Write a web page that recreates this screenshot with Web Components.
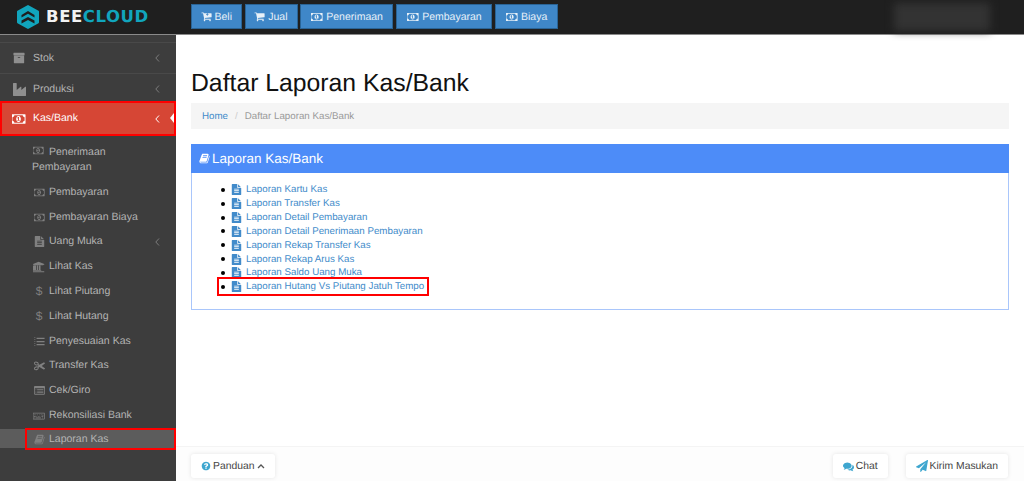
<!DOCTYPE html>
<html lang="id">
<head>
<meta charset="utf-8">
<title>Daftar Laporan Kas/Bank</title>
<style>
  html, body { margin: 0; height: 100%; overflow: hidden; background: #fff; }
  body { font-family: "Liberation Sans", Arial, sans-serif; text-rendering: geometricPrecision; }
</style>
</head>
<body>
<app-shell>
  <top-bar slot="top">
    <top-button icon="cartplus" size="11">Beli</top-button>
    <top-button icon="cart" size="11">Jual</top-button>
    <top-button icon="money" size="12">Penerimaan</top-button>
    <top-button icon="money" size="12">Pembayaran</top-button>
    <top-button icon="money" size="12">Biaya</top-button>
  </top-bar>
  <side-bar slot="side">
    <side-item icon="archive" size="12" level="1" arrow>Stok</side-item>
    <side-item icon="industry" size="13" level="1" arrow>Produksi</side-item>
    <side-item icon="money" size="14" level="1" arrow active>Kas/Bank</side-item>
    <div style="height:3px"></div>
    <side-item icon="money" size="11" wrap>Penerimaan Pembayaran</side-item>
    <side-item icon="money" size="11">Pembayaran</side-item>
    <side-item icon="money" size="11">Pembayaran Biaya</side-item>
    <side-item icon="file" size="11" arrow>Uang Muka</side-item>
    <side-item icon="bank" size="12">Lihat Kas</side-item>
    <side-item icon="usd">Lihat Piutang</side-item>
    <side-item icon="usd">Lihat Hutang</side-item>
    <side-item icon="listol" size="11">Penyesuaian Kas</side-item>
    <side-item icon="scissors" size="11">Transfer Kas</side-item>
    <side-item icon="listalt" size="11">Cek/Giro</side-item>
    <side-item icon="keyboard" size="12">Rekonsiliasi Bank</side-item>
    <side-item icon="book" size="11" current>Laporan Kas</side-item>
  </side-bar>
  <report-page slot="main" heading="Daftar Laporan Kas/Bank">
    <report-panel heading="Laporan Kas/Bank">
      <report-link>Laporan Kartu Kas</report-link>
      <report-link>Laporan Transfer Kas</report-link>
      <report-link>Laporan Detail Pembayaran</report-link>
      <report-link>Laporan Detail Penerimaan Pembayaran</report-link>
      <report-link>Laporan Rekap Transfer Kas</report-link>
      <report-link>Laporan Rekap Arus Kas</report-link>
      <report-link>Laporan Saldo Uang Muka</report-link>
      <report-link marked>Laporan Hutang Vs Piutang Jatuh Tempo</report-link>
    </report-panel>
  </report-page>
</app-shell>

<script>
// Icônes dessinées en SVG (viewBox + tracé)
const ICONS = {
  money: ['0 0 1920 1792', 'M704 1152h384v-96h-128v-448h-114l-148 137 77 80q42-37 55-57h2v288h-128v96zm512-256q0 70-21 142t-59.5 134-101.5 101-138 39-138-39-101.5-101-59.5-134-21-142 21-142 59.5-134 101.5-101 138-39 138 39 101.5 101 59.5 134 21 142zm512 256v-512q-106 0-181-75t-75-181h-1152q0 106-75 181t-181 75v512q106 0 181 75t75 181h1152q0-106 75-181t181-75zm128-832v1152q0 26-19 45t-45 19h-1792q-26 0-45-19t-19-45v-1152q0-26 19-45t45-19h1792q26 0 45 19t19 45z'],
  cart: ['0 0 1792 1792', 'M704 1536q0 52-38 90t-90 38-90-38-38-90 38-90 90-38 90 38 38 90zm896 0q0 52-38 90t-90 38-90-38-38-90 38-90 90-38 90 38 38 90zm128-1088v512q0 24-16.5 42.5t-40.5 21.500l-1044 122q13 60 13 70 0 16-24 64h920q26 0 45 19t19 45-19 45-45 19h-1024q-26 0-45-19t-19-45q0-11 8-31.500t16-36 21.500-40 15.500-29.500l-177-823h-204q-26 0-45-19t-19-45 19-45 45-19h256q16 0 28.500 6.500t19.500 15.500 13 24.500 8 26 5.500 29.500 4.500 26h1201q26 0 45 19t19 45z'],
  cartplus: ['0 0 1792 1792', 'M704 1536q0 52-38 90t-90 38-90-38-38-90 38-90 90-38 90 38 38 90zm896 0q0 52-38 90t-90 38-90-38-38-90 38-90 90-38 90 38 38 90zm128-1088v512q0 24-16.5 42.500t-40.500 21.500l-1044 122q13 60 13 70 0 16-24 64h920q26 0 45 19t19 45-19 45-45 19h-1024q-26 0-45-19t-19-45q0-11 8-31.500t16-36 21.500-40 15.500-29.500l-177-823h-204q-26 0-45-19t-19-45 19-45 45-19h256q16 0 28.500 6.500t19.500 15.500 13 24.500 8 26 5.500 29.500 4.500 26h1201q26 0 45 19t19 45zm-640 64v-128h-128v128h-128v128h128v128h128v-128h128v-128z'],
  file: ['0 0 1792 1792', 'M1596 476q14 14 28 36h-472v-472q22 14 36 28zm-476 164h544v1056q0 40-28 68t-68 28h-1344q-40 0-68-28t-28-68v-1600q0-40 28-68t68-28h800v544q0 40 28 68t68 28zm160 736v-64q0-14-9-23t-23-9h-704q-14 0-23 9t-9 23v64q0 14 9 23t23 9h704q14 0 23-9t9-23zm0-256v-64q0-14-9-23t-23-9h-704q-14 0-23 9t-9 23v64q0 14 9 23t23 9h704q14 0 23-9t9-23zm0-256v-64q0-14-9-23t-23-9h-704q-14 0-23 9t-9 23v64q0 14 9 23t23 9h704q14 0 23-9t9-23z'],
  book: ['0 0 1792 1792', 'M1703 478q40 57 18 129l-275 906q-19 64-76.500 107.500t-122.500 43.500h-923q-77 0-148.500-53.500t-99.500-131.500q-24-67-2-127 0-4 3-27t4-37q1-8-3-21.500t-3-19.500q2-11 8-21t16.500-23.500 16.500-23.500q23-38 45-91.500t30-91.500q3-10 .5-30t-.5-28q3-11 17-28t17-23q21-36 42-92t25-90q1-9-2.500-32t.5-28q4-13 22-30.500t22-22.500q19-26 42.500-84.500t27.500-96.500q1-8-3-25.500t-2-26.500q2-8 9-18t18-23 17-21q8-12 16.500-30.500t15-35 16-36 19.500-32 26.500-23.500 36-11.500 47.500 5.500l-1 3q38-9 51-9h761q74 0 114 56t18 130l-274 906q-36 119-71.500 153.500t-128.500 34.500h-869q-27 0-38 15-11 16-1 43 24 70 144 70h923q29 0 56-15.500t35-41.500l300-987q7-22 5-57 38 15 59 43zm-1064 2q-4 13 2 22.500t20 9.500h608q13 0 25.500-9.500t16.500-22.500l21-64q4-13-2-22.500t-20-9.500h-608q-13 0-25.500 9.500t-16.500 22.500zm-83 256q-4 13 2 22.500t20 9.500h608q13 0 25.500-9.500t16.500-22.500l21-64q4-13-2-22.500t-20-9.500h-608q-13 0-25.500 9.500t-16.500 22.500z'],
  archive: ['0 0 1792 1792', 'M1088 832q0-26-19-45t-45-19h-256q-26 0-45 19t-19 45 19 45 45 19h256q26 0 45-19t19-45zm576-192v960q0 26-19 45t-45 19h-1408q-26 0-45-19t-19-45v-960q0-26 19-45t45-19h1408q26 0 45 19t19 45zm64-448v256q0 26-19 45t-45 19h-1536q-26 0-45-19t-19-45v-256q0-26 19-45t45-19h1536q26 0 45 19t19 45z'],
  industry: ['0 0 1792 1792', 'M448 0q26 0 45 19t19 45v891l536-429q17-14 40-14 26 0 45 19t19 45v379l536-429q17-14 40-14 26 0 45 19t19 45v1152q0 26-19 45t-45 19h-1664q-26 0-45-19t-19-45v-1664q0-26 19-45t45-19h384z'],
  bank: ['0 0 2048 1792', 'M960 0l960 384v128h-128q0 26-20.500 45t-48.500 19h-1526q-28 0-48.500-19t-20.500-45h-128v-128zm-704 640h256v768h128v-768h256v768h128v-768h256v768h59q28 0 48.500 19t20.500 45v64h-1664v-64q0-26 20.500-45t48.500-19h59v-768zm1595 960q28 0 48.500 19t20.500 45v128h-1920v-128q0-26 20.500-45t48.500-19h1782z'],
  listol: ['0 0 1792 1792', 'M60 180h150v110h-150zM60 500h150v110h-150zM60 820h150v110h-150zM60 1140h150v110h-150zM60 1460h150v110h-150zM420 300h1300v200h-1300zM420 800h1300v200h-1300zM420 1300h1300v200h-1300z'],
  scissors: ['0 0 1792 1792', 'M960 896q26 0 45 19t19 45-19 45-45 19-45-19-19-45 19-45 45-19zm300 64l507 398q28 20 25 56-5 35-35 51l-128 64q-13 7-29 7-17 0-31-8l-690-387-110 66q-8 4-12 5 14 49 10 97-7 77-56 147.500t-132 123.500q-132 84-277 84-136 0-222-78-90-84-79-207 7-76 56-147t131-124q132-84 278-84 83 0 151 31 9-13 22-22l122-73-122-73q-13-9-22-22-68 31-151 31-146 0-278-84-82-53-131-124t-56-147q-5-59 15.500-113t63.500-93q85-79 222-79 145 0 277 84 83 52 132 123t56 148q4 48-10 97 4 1 12 5l110 66 690-387q14-8 31-8 16 0 29 7l128 64q30 16 35 51 3 36-25 56zm-681-260q46-42 21-108t-106-117q-92-59-192-59-74 0-113 36-46 42-21 108t106 117q92 59 192 59 74 0 113-36zm-85 745q81-51 106-117t-21-108q-39-36-113-36-100 0-192 59-81 51-106 117t21 108q39 36 113 36 100 0 192-59z'],
  listalt: ['0 0 1792 1792', 'M384 1216v64q0 13-9.500 22.500t-22.500 9.500h-64q-13 0-22.500-9.500t-9.500-22.500v-64q0-13 9.500-22.500t22.500-9.500h64q13 0 22.500 9.500t9.500 22.500zm0-256v64q0 13-9.500 22.500t-22.500 9.500h-64q-13 0-22.500-9.500t-9.500-22.500v-64q0-13 9.500-22.500t22.500-9.500h64q13 0 22.500 9.500t9.500 22.500zm0-256v64q0 13-9.500 22.500t-22.500 9.500h-64q-13 0-22.500-9.500t-9.500-22.500v-64q0-13 9.500-22.500t22.500-9.500h64q13 0 22.500 9.500t9.500 22.500zm1152 512v64q0 13-9.500 22.500t-22.500 9.500h-960q-13 0-22.500-9.500t-9.500-22.500v-64q0-13 9.500-22.500t22.500-9.500h960q13 0 22.500 9.500t9.500 22.500zm0-256v64q0 13-9.500 22.500t-22.500 9.500h-960q-13 0-22.500-9.500t-9.500-22.500v-64q0-13 9.500-22.500t22.500-9.500h960q13 0 22.500 9.500t9.500 22.500zm0-256v64q0 13-9.500 22.500t-22.500 9.500h-960q-13 0-22.500-9.500t-9.500-22.500v-64q0-13 9.500-22.500t22.500-9.500h960q13 0 22.500 9.500t9.500 22.500zm128 704v-832q0-13-9.500-22.500t-22.500-9.500h-1472q-13 0-22.500 9.500t-9.500 22.500v832q0 13 9.500 22.500t22.500 9.500h1472q13 0 22.500-9.500t9.500-22.500zm128-1088v1088q0 66-47 113t-113 47h-1472q-66 0-113-47t-47-113v-1088q0-66 47-113t113-47h1472q66 0 113 47t47 113z'],
  keyboard: ['0 0 2048 1792', 'M288 1184v96q0 16-16 16h-96q-16 0-16-16v-96q0-16 16-16h96q16 0 16 16zm176-256v96q0 16-16 16h-272q-16 0-16-16v-96q0-16 16-16h272q16 0 16 16zm-176-256v96q0 16-16 16h-96q-16 0-16-16v-96q0-16 16-16h96q16 0 16 16zm1056 512v96q0 16-16 16h-864q-16 0-16-16v-96q0-16 16-16h864q16 0 16 16zm-624-256v96q0 16-16 16h-96q-16 0-16-16v-96q0-16 16-16h96q16 0 16 16zm-176-256v96q0 16-16 16h-96q-16 0-16-16v-96q0-16 16-16h96q16 0 16 16zm432 256v96q0 16-16 16h-96q-16 0-16-16v-96q0-16 16-16h96q16 0 16 16zm-176-256v96q0 16-16 16h-96q-16 0-16-16v-96q0-16 16-16h96q16 0 16 16zm432 256v96q0 16-16 16h-96q-16 0-16-16v-96q0-16 16-16h96q16 0 16 16zm432 256v96q0 16-16 16h-96q-16 0-16-16v-96q0-16 16-16h96q16 0 16 16zm-432-512v96q0 16-16 16h-96q-16 0-16-16v-96q0-16 16-16h96q16 0 16 16zm256 0v96q0 16-16 16h-96q-16 0-16-16v-96q0-16 16-16h96q16 0 16 16zm256 0v352q0 16-16 16h-272q-16 0-16-16v-96q0-16 16-16h176v-240q0-16 16-16h80q16 0 16 16zm128 672v-896h-1792v896h1792zm128-896v896q0 53-37.500 90.500t-90.500 37.500h-1792q-53 0-90.500-37.500t-37.500-90.500v-896q0-53 37.500-90.500t90.500-37.500h1792q53 0 90.500 37.500t37.500 90.500z'],
  question: ['0 0 1792 1792', 'M1024 1376v-192q0-14-9-23t-23-9h-192q-14 0-23 9t-9 23v192q0 14 9 23t23 9h192q14 0 23-9t9-23zm256-672q0-88-55.500-163t-138.500-116-170-41q-243 0-371 213-15 24 8 42l132 100q7 6 19 6 16 0 25-12 53-68 86-92 34-24 86-24 48 0 85.500 26t37.500 59q0 38-20 61t-68 45q-63 28-115.500 86.500t-52.500 125.500v36q0 14 9 23t23 9h192q14 0 23-9t9-23q0-19 21.500-49.500t54.500-49.500q32-18 49-28.500t46-35 44.500-48 28-60.500 12.500-81zm384 192q0 209-103 385.500t-279.500 279.500-385.500 103-385.500-103-279.500-279.500-103-385.500 103-385.500 279.500-279.500 385.500-103 385.500 103 279.500 279.500 103 385.500z'],
  comments: ['0 0 1792 1792', 'M1408 768q0 139-94 257t-256.500 186.500-353.500 68.500q-86 0-176-16-124 88-278 128-36 9-86 16h-3q-11 0-20.500-8t-11.500-21q-1-3-1-6.500t.5-6.500 2-6l2.500-5 3.500-5.500 4-5 4.500-5 4-4.500q5-6 23-25t26-29.500 22.500-29 25-38.500 20.500-44q-124-72-195-177t-71-224q0-139 94-257t256.500-186.500 353.500-68.500 353.500 68.500 256.500 186.500 94 257zm384 256q0 120-71 224.500t-195 176.500q10 24 20.500 44t25 38.500 22.500 29 26 29.500 23 25q1 1 4 4.500t4.500 5 4 5 3.500 5.500l2.500 5 2 6 .5 6.500-1 6.500q-3 14-13 22t-22 7q-50-7-86-16-154-40-278-128-90 16-176 16-271 0-472-132 58 4 88 4 161 0 309-45t264-129q125-92 192-212t67-254q0-77-23-152 129 71 204 178t75 230z'],
  plane: ['0 0 1792 1792', 'M1764 11q33 24 27 64l-256 1536q-5 29-32 45-14 8-31 8-11 0-24-5l-453-185-242 295q-18 23-49 23-13 0-22-4-19-7-30.500-23.500t-11.500-36.500v-349l864-1059-1069 925-395-162q-37-14-40-55-2-40 32-59l1664-960q15-9 32-9 20 0 36 11z']
};

function iconSvg(name, size) {
  const [box, d] = ICONS[name];
  return `<svg viewBox="${box}" width="${size}" height="${size}" fill="currentColor" aria-hidden="true" style="display:block;flex:none"><path d="${d}"/></svg>`;
}

class AppShell extends HTMLElement {
  constructor() {
    super();
    this.attachShadow({ mode: 'open' });
    this.shadowRoot.innerHTML = `
      <style>
        :host { display: grid; grid-template: 35px 1fr / 176px 1fr; width: 1024px; height: 481px; overflow: hidden; }
        ::slotted([slot=top]) { grid-column: 1 / 3; }
      </style>
      <slot name="top"></slot><slot name="side"></slot><slot name="main"></slot>`;
  }
}

class TopBar extends HTMLElement {
  constructor() {
    super();
    this.attachShadow({ mode: 'open' });
    this.shadowRoot.innerHTML = `
      <style>
        :host { display: flex; align-items: flex-start; box-sizing: border-box; height: 35px; background: #1f1f1f; border-bottom: 1px solid #8a8a8a; }
        .brand { display: flex; align-items: center; gap: 6px; width: 191px; box-sizing: border-box; padding-left: 16px; height: 34px; }
        .word { font: bold 16.500px "DejaVu Sans", sans-serif; letter-spacing: .55px; color: #f2f2f2; line-height: 24px; }
        .word span { color: #11a5bd; }
        .btns { display: flex; gap: 2.750px; padding-top: 4px; }
        .blur { margin: 3px 34px 0 auto; width: 96px; height: 28px; background: #333; filter: blur(4px); }
      </style>
      <div class="brand">
        <svg width="24" height="26" viewBox="0 0 24 26" style="flex:none">
          <path d="M12 2 22 7.700V18.300L12 24 2 18.300V7.700Z" fill="#11a5bd" stroke="#11a5bd" stroke-width="2" stroke-linejoin="round"/>
          <path d="M5.500 11 12 7 18.500 11V13.500L12 9.800 5.500 13.500ZM5.500 16.500 12 13 18.500 16.500V19.500L12 16 5.500 19.500Z" fill="#1f1f1f"/>
        </svg>
        <div class="word">BEE<span>CLOUD</span></div>
      </div>
      <div class="btns"><slot></slot></div>
      <div class="blur"></div>`;
  }
}

class TopButton extends HTMLElement {
  constructor() {
    super();
    this.attachShadow({ mode: 'open' });
  }
  connectedCallback() {
    this.shadowRoot.innerHTML = `
      <style>
        :host { display: flex; align-items: center; gap: 3px; box-sizing: border-box; height: 25px; padding: 0 9.500px 0 10px; background: #3f87c8; border: 1px solid #2a6496; color: #e8f1f8; font-size: 10.500px; white-space: nowrap; }
        :host([size="11"]) { padding: 0 9px 0 8.500px; }
      </style>
      ${iconSvg(this.getAttribute('icon'), this.getAttribute('size'))}<slot></slot>`;
  }
}

class SideBar extends HTMLElement {
  constructor() {
    super();
    this.attachShadow({ mode: 'open' });
    this.shadowRoot.innerHTML = `
      <style>
        :host { display: block; background: #3d3d3d; padding-top: 7px; overflow: hidden; }
      </style>
      <slot></slot>`;
  }
}

class SideItem extends HTMLElement {
  constructor() {
    super();
    this.attachShadow({ mode: 'open' });
  }
  connectedCallback() {
    const name = this.getAttribute('icon');
    const arrow = this.hasAttribute('arrow') ? `<svg class="arrow" width="5" height="8" viewBox="0 0 5 8"><path d="M4 .5.8 4 4 7.500" fill="none" stroke="currentColor" stroke-width="1"/></svg>` : '';
    const icon = name === 'usd' ? `<span class="ic usd">$</span>` : `<span class="ic">${iconSvg(name, this.getAttribute('size'))}</span>`;
    this.shadowRoot.innerHTML = `
      <style>
        :host { display: block; box-sizing: border-box; position: relative; font-size: 10.500px; color: #b4b4b4; line-height: 15px; }
        .row { display: flex; align-items: center; height: 24.800px; padding-left: 33px; box-sizing: border-box; }
        .ic { display: flex; justify-content: center; flex: none; width: 12px; margin-right: 4px; color: #808080; }
        :host([level="1"]) .row { height: 31px; padding-left: 12px; border-top: 1px solid #494949; }
        :host([level="1"]) .ic { width: 14px; margin-right: 7px; color: #8f8f8f; }
        :host([icon="industry"]) { height: 28px; }
        :host([active]) .row { height: 35px; background: #d64635; color: #fff; border: 2px solid #f00; padding-left: 10px; }
        :host([active]) .ic { color: #fff; }
        :host([active]) .arrow { color: #fff; stroke-width: 2; margin-right: 14px; }
        :host([active]) .row::after { content: ""; position: absolute; right: 2px; top: 12px; border: 5px solid transparent; border-right: 4px solid #fff; border-left: 0; }
        .arrow { margin-left: auto; margin-right: 16px; color: #7c7c7c; flex: none; }
        .usd { font-size: 12px; }
        :host([wrap]) .row { display: block; height: auto; padding: 6px 10px 5px 32px; }
        :host([wrap]) .ic { display: inline-block; vertical-align: -1px; margin-left: 1px; }
        :host([current]) { height: 19px; margin-top: 1px; background: #5c5c5c; }
        :host([current]) .row { position: absolute; left: 25px; right: 0; top: -1px; height: 22px; padding: 2px 0 0 6px; border: 2px solid #f00; }
      </style>
      <div class="row">${icon}<slot></slot>${arrow}</div>`;
  }
}

class ReportPage extends HTMLElement {
  constructor() {
    super();
    this.attachShadow({ mode: 'open' });
  }
  connectedCallback() {
    this.shadowRoot.innerHTML = `
      <style>
        :host { display: flex; flex-direction: column; min-height: 0; }
        .content { flex: 1; padding: 0 15px; }
        h1 { margin: 32px 0 2px; font-weight: 400; font-size: 24.750px; line-height: 34px; color: #111; }
        .crumb { margin: 0 0 15px; height: 26px; padding-left: 11px; display: flex; align-items: center; gap: 7px; background: #f5f5f5; font-size: 9.750px; color: #999; }
        .crumb a { color: #428bca; }
        .crumb i { color: #ccc; font-style: normal; }
        .foot { display: flex; justify-content: space-between; align-items: flex-start; box-sizing: border-box; height: 35px; padding: 7px 16px 0 15px; border-top: 1px solid #f4f4f4; background: #fdfdfd; }
        .group { display: flex; gap: 18px; }
        .fb { display: flex; align-items: center; gap: 2px; box-sizing: border-box; height: 24px; padding: 0 10px; background: #fff; border-radius: 3px; box-shadow: 0 0 4px rgba(0,0,0,.1); font-size: 10.350px; color: #444; white-space: nowrap; }
        .fb svg { color: #3ea6cf; }
      </style>
      <div class="content">
        <h1>${this.getAttribute('heading')}</h1>
        <div class="crumb"><a>Home</a><i>/</i><span>${this.getAttribute('heading')}</span></div>
        <slot></slot>
      </div>
      <div class="foot">
        <div class="fb">${iconSvg('question', 10)}Panduan <svg width="8" height="6" viewBox="0 0 8 6" style="margin-left:1px;color:#555"><path d="M1 5l3-3 3 3" fill="none" stroke="currentColor" stroke-width="1.300"/></svg></div>
        <div class="group">
          <div class="fb">${iconSvg('comments', 11)}Chat</div>
          <div class="fb">${iconSvg('plane', 12)}Kirim Masukan</div>
        </div>
      </div>`;
  }
}

class ReportPanel extends HTMLElement {
  constructor() {
    super();
    this.attachShadow({ mode: 'open' });
  }
  connectedCallback() {
    this.shadowRoot.innerHTML = `
      <style>
        :host { display: block; box-sizing: border-box; height: 166px; border: 1px solid #a9c6fb; }
        .head { display: flex; align-items: center; gap: 2px; height: 29px; margin: -1px -1px 0; padding-left: 8px; background: #4d8cf8; color: #fff; font-size: 13.500px; }
        .body { padding: 10px 0 0 29px; }
      </style>
      <div class="head">${iconSvg('book', 11)}${this.getAttribute('heading')}</div>
      <div class="body"><slot></slot></div>`;
  }
}

class ReportLink extends HTMLElement {
  constructor() {
    super();
    this.attachShadow({ mode: 'open' });
  }
  connectedCallback() {
    this.shadowRoot.innerHTML = `
      <style>
        :host { display: flex; align-items: center; position: relative; height: 13.850px; font-size: 9.750px; color: #428bca; white-space: nowrap; }
        .dot { width: 4px; height: 4px; border-radius: 50%; background: #000; margin-right: 6px; flex: none; }
        svg { margin-right: 4px; }
        .mark { position: absolute; left: -4px; top: -3px; width: 212px; height: 19px; box-sizing: border-box; border: 2px solid #f00; display: none; }
        :host([marked]) .mark { display: block; }
      </style>
      <span class="dot"></span>${iconSvg('file', 11)}<slot></slot><span class="mark"></span>`;
  }
}

customElements.define('app-shell', AppShell);
customElements.define('top-bar', TopBar);
customElements.define('top-button', TopButton);
customElements.define('side-bar', SideBar);
customElements.define('side-item', SideItem);
customElements.define('report-page', ReportPage);
customElements.define('report-panel', ReportPanel);
customElements.define('report-link', ReportLink);
</script>
</body>
</html>
